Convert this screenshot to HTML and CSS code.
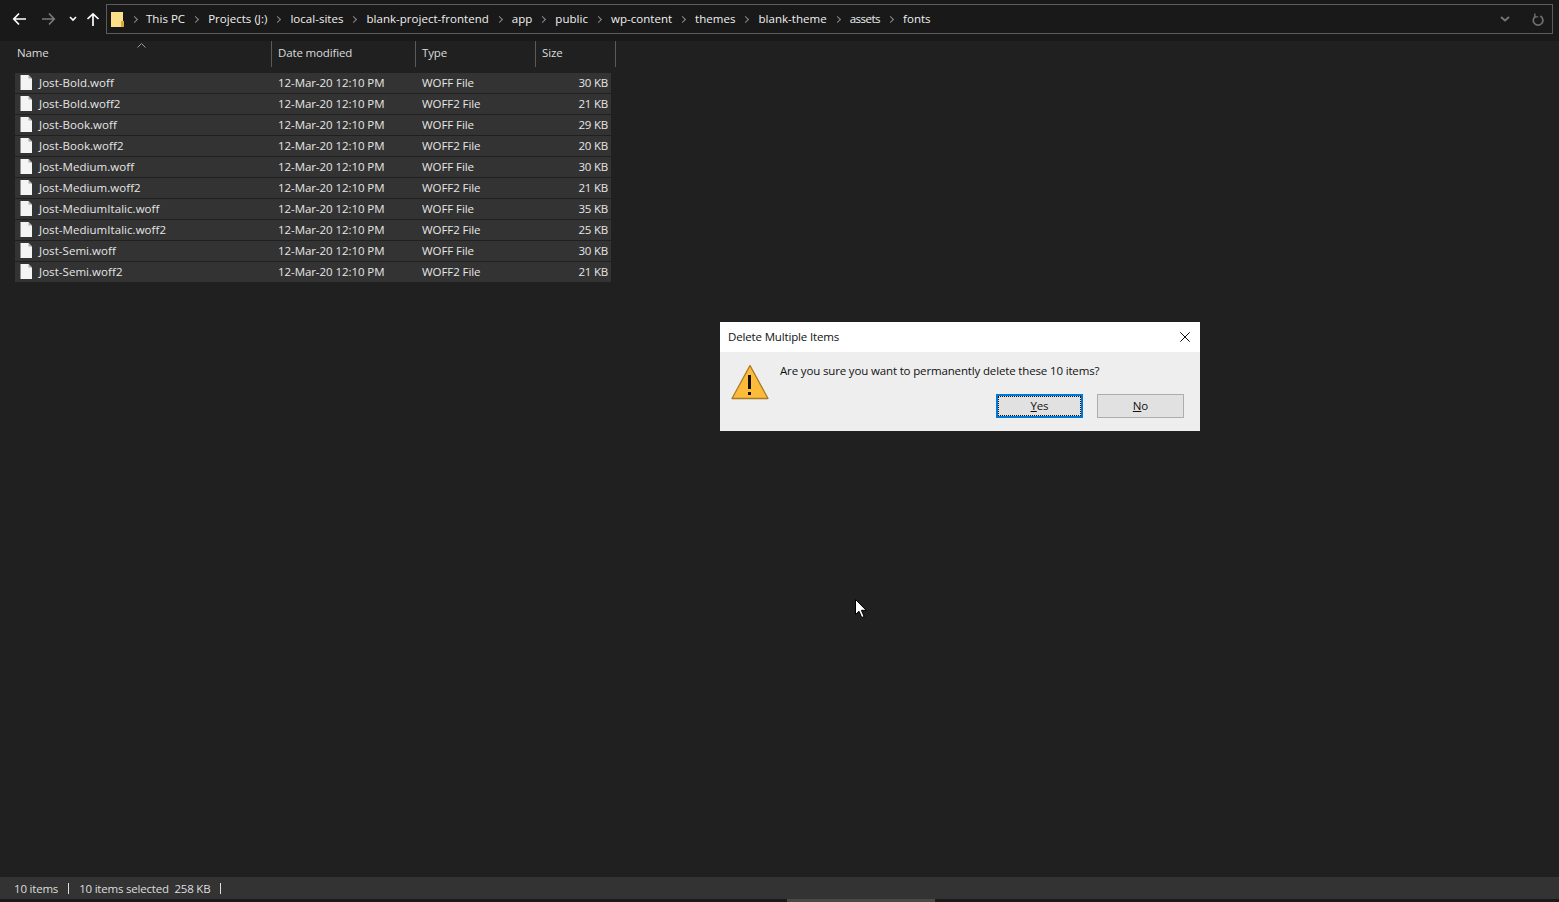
FILE: index.html
```html
<!DOCTYPE html>
<html lang="en">
<head>
    <meta charset="UTF-8">
    <meta name="viewport" content="width=device-width, initial-scale=1.0">
    <title>fonts</title>
    <link rel="stylesheet" href="styles.css">
</head>
<body>
    <div class="explorer">
        <div class="toolbar">
            <div class="nav">
                <svg class="nav-back" width="14" height="14" viewBox="0 0 14 14"><path d="M7 1.5 1.800 7 7 12.500M2 7h12" fill="none" stroke="#fff" stroke-width="1.700"/></svg>
                <svg class="nav-forward" width="14" height="14" viewBox="0 0 14 14"><path d="M7 1.500 12.200 7 7 12.500M12 7H0" fill="none" stroke="#7a7a7a" stroke-width="1.700"/></svg>
                <svg class="nav-recent" width="8" height="6" viewBox="0 0 8 6"><path d="M1 1l3 3 3-3" fill="none" stroke="#fff" stroke-width="1.600"/></svg>
                <svg class="nav-up" width="14" height="14" viewBox="0 0 14 14"><path d="M1.500 7 7 1.800 12.500 7M7 2v12" fill="none" stroke="#fff" stroke-width="1.700"/></svg>
            </div>
            <div class="address">
                <svg class="folder" width="13" height="17" viewBox="0 0 13 17"><path d="M0 1h12v15H0z" fill="#ffe08a"/><path d="M10 10h3v6h-3z" fill="#d9a93f"/></svg>
                <span class="sep first"></span>
                <span class="crumb">This PC</span><span class="sep"></span>
                <span class="crumb">Projects (J:)</span><span class="sep"></span>
                <span class="crumb">local-sites</span><span class="sep"></span>
                <span class="crumb">blank-project-frontend</span><span class="sep"></span>
                <span class="crumb">app</span><span class="sep"></span>
                <span class="crumb">public</span><span class="sep"></span>
                <span class="crumb">wp-content</span><span class="sep"></span>
                <span class="crumb">themes</span><span class="sep"></span>
                <span class="crumb">blank-theme</span><span class="sep"></span>
                <span class="crumb crumb-tight">assets</span><span class="sep"></span>
                <span class="crumb">fonts</span>
                <div class="address-end">
                    <svg width="10" height="6" viewBox="0 0 10 6"><path d="M1 1l4 3.500L9 1" fill="none" stroke="#777" stroke-width="1.800"/></svg>
                    <svg class="refresh" width="12" height="13" viewBox="0 0 12 13"><path d="M3.600 3.200A4.800 4.800 0 1 0 8.200 3" fill="none" stroke="#6f6f6f" stroke-width="1.700"/><path d="M2.800 .5v3.400h3.400" fill="none" stroke="#6f6f6f" stroke-width="1.400"/></svg>
                </div>
            </div>
        </div>

        <div class="list-head">
            <div class="col-name">Name<span class="sort-caret"><svg width="9" height="5" viewBox="0 0 9 5"><path d="M.5 4.500l4-4 4 4" fill="none" stroke="#9a9a9a"/></svg></span></div>
            <div class="col-date">Date modified</div>
            <div class="col-type">Type</div>
            <div class="col-size">Size</div>
        </div>

        <div class="files">
            <div class="file"><span class="file-name"><svg class="file-icon" width="12" height="15" viewBox="0 0 12 15"><path d="M.5 0H8.500L12 3.500V15H.500z" fill="#f4f4f4"/><path d="M8.500 0v3.500H12z" fill="#a8a8a8"/></svg>Jost-Bold.woff</span><span>12-Mar-20 12:10 PM</span><span>WOFF File</span><span class="file-size">30 KB</span></div>
            <div class="file"><span class="file-name"><svg class="file-icon" width="12" height="15" viewBox="0 0 12 15"><path d="M.5 0H8.500L12 3.500V15H.500z" fill="#f4f4f4"/><path d="M8.500 0v3.500H12z" fill="#a8a8a8"/></svg>Jost-Bold.woff2</span><span>12-Mar-20 12:10 PM</span><span>WOFF2 File</span><span class="file-size">21 KB</span></div>
            <div class="file"><span class="file-name"><svg class="file-icon" width="12" height="15" viewBox="0 0 12 15"><path d="M.5 0H8.500L12 3.500V15H.500z" fill="#f4f4f4"/><path d="M8.500 0v3.500H12z" fill="#a8a8a8"/></svg>Jost-Book.woff</span><span>12-Mar-20 12:10 PM</span><span>WOFF File</span><span class="file-size">29 KB</span></div>
            <div class="file"><span class="file-name"><svg class="file-icon" width="12" height="15" viewBox="0 0 12 15"><path d="M.5 0H8.500L12 3.500V15H.500z" fill="#f4f4f4"/><path d="M8.500 0v3.500H12z" fill="#a8a8a8"/></svg>Jost-Book.woff2</span><span>12-Mar-20 12:10 PM</span><span>WOFF2 File</span><span class="file-size">20 KB</span></div>
            <div class="file"><span class="file-name"><svg class="file-icon" width="12" height="15" viewBox="0 0 12 15"><path d="M.5 0H8.500L12 3.500V15H.500z" fill="#f4f4f4"/><path d="M8.500 0v3.500H12z" fill="#a8a8a8"/></svg>Jost-Medium.woff</span><span>12-Mar-20 12:10 PM</span><span>WOFF File</span><span class="file-size">30 KB</span></div>
            <div class="file"><span class="file-name"><svg class="file-icon" width="12" height="15" viewBox="0 0 12 15"><path d="M.5 0H8.500L12 3.500V15H.500z" fill="#f4f4f4"/><path d="M8.500 0v3.500H12z" fill="#a8a8a8"/></svg>Jost-Medium.woff2</span><span>12-Mar-20 12:10 PM</span><span>WOFF2 File</span><span class="file-size">21 KB</span></div>
            <div class="file"><span class="file-name"><svg class="file-icon" width="12" height="15" viewBox="0 0 12 15"><path d="M.5 0H8.500L12 3.500V15H.500z" fill="#f4f4f4"/><path d="M8.500 0v3.500H12z" fill="#a8a8a8"/></svg>Jost-MediumItalic.woff</span><span>12-Mar-20 12:10 PM</span><span>WOFF File</span><span class="file-size">35 KB</span></div>
            <div class="file"><span class="file-name"><svg class="file-icon" width="12" height="15" viewBox="0 0 12 15"><path d="M.5 0H8.500L12 3.500V15H.500z" fill="#f4f4f4"/><path d="M8.500 0v3.500H12z" fill="#a8a8a8"/></svg>Jost-MediumItalic.woff2</span><span>12-Mar-20 12:10 PM</span><span>WOFF2 File</span><span class="file-size">25 KB</span></div>
            <div class="file"><span class="file-name"><svg class="file-icon" width="12" height="15" viewBox="0 0 12 15"><path d="M.5 0H8.500L12 3.500V15H.500z" fill="#f4f4f4"/><path d="M8.500 0v3.500H12z" fill="#a8a8a8"/></svg>Jost-Semi.woff</span><span>12-Mar-20 12:10 PM</span><span>WOFF File</span><span class="file-size">30 KB</span></div>
            <div class="file"><span class="file-name"><svg class="file-icon" width="12" height="15" viewBox="0 0 12 15"><path d="M.5 0H8.500L12 3.500V15H.500z" fill="#f4f4f4"/><path d="M8.500 0v3.500H12z" fill="#a8a8a8"/></svg>Jost-Semi.woff2</span><span>12-Mar-20 12:10 PM</span><span>WOFF2 File</span><span class="file-size">21 KB</span></div>
        </div>

        <div class="status">
            <span>10 items</span><i class="bar"></i>
            <span>10 items selected&nbsp; 258 KB</span><i class="bar"></i>
        </div>
        <div class="taskbar"><div class="task-active"></div></div>
    </div>

    <div class="dialog">
        <div class="dialog-title">
            <span>Delete Multiple Items</span>
            <svg width="10" height="10" viewBox="0 0 10 10"><path d="M.3.3l9.400 9.400M9.700.3l-9.400 9.400" stroke="#111" stroke-width="1" fill="none"/></svg>
        </div>
        <div class="dialog-body">
            <svg class="warn" width="38" height="36" viewBox="0 0 38 36"><path d="M19 1.500 37 34.500H1z" fill="#fdbb3c" stroke="#a87a22" stroke-width="1.300" stroke-linejoin="round"/><path d="M17 11h3v14h-3zM17 28h3v3h-3z" fill="#111"/></svg>
            <div class="dialog-main">
                <p class="dialog-msg">Are you sure you want to permanently delete these 10 items?</p>
                <div class="dialog-btns">
                    <button class="btn btn-default"><u>Y</u>es</button>
                    <button class="btn"><u>N</u>o</button>
                </div>
            </div>
        </div>
    </div>

    <svg class="cursor" width="12" height="20" viewBox="0 0 12 20"><path d="M.5.500v15l3.500-3.300 2.700 6.300 2.400-1-2.700-6.200h4.800z" fill="#fff" stroke="#000"/></svg>
</body>
</html>
```

FILE: styles.css
```css
body {
    margin: 0;
    background-color: #202020;
    color: #e6e6e6;
    font-family: "Open Sans", Arial, sans-serif;
    font-size: 11.5px;
    letter-spacing: -0.15px;
    overflow: hidden;
}

.explorer {
    display: flex;
    flex-direction: column;
    height: 902px;
}

/* top bar */
.toolbar {
    display: flex;
    align-items: flex-start;
    height: 41px;
    padding-top: 4px;
    box-sizing: border-box;
    background-color: #191919;
}

.nav {
    position: relative;
    width: 106px;
    height: 30px;
    flex: none;
}

.nav svg {
    position: absolute;
}

.nav-back { left: 12px; top: 8px; }
.nav-forward { left: 42px; top: 8px; }
.nav-recent { left: 69px; top: 12px; }
.nav-up { left: 86px; top: 8px; }

.address {
    display: flex;
    align-items: center;
    flex: 1;
    height: 30px;
    margin-right: 6px;
    box-sizing: border-box;
    border: 1px solid #5c5c5c;
    background-color: #191919;
    color: #f0f0f0;
    padding-left: 4px;
}

.folder {
    flex: none;
}

.sep {
    display: flex;
    align-items: center;
    justify-content: center;
    width: 23px;
    height: 10px;
    flex: none;
}

.sep::before {
    content: "";
    width: 4px;
    height: 4px;
    margin-left: -2px;
    border-top: 1px solid #8a8a8a;
    border-right: 1px solid #8a8a8a;
    transform: rotate(45deg);
}

.sep.first {
    width: 22px;
}

.crumb {
    white-space: nowrap;
    padding-bottom: 2px;
    letter-spacing: 0.03px;
}

.crumb-tight {
    letter-spacing: -0.5px;
}

.address-end {
    margin-left: auto;
    display: flex;
    align-items: center;
    gap: 22px;
    padding-right: 8px;
}

/* column headers */
.list-head {
    display: grid;
    grid-template-columns: 257px 144px 120px 80px;
    height: 26px;
    margin-left: 15px;
    margin-bottom: 6px;
    width: 601px;
    color: #dcdcdc;
}

.list-head > div {
    box-sizing: border-box;
    border-right: 1px solid #5a5a5a;
    padding-left: 6px;
    line-height: 24px;
}

.list-head .col-name {
    position: relative;
    padding-left: 2px;
}

.sort-caret {
    position: absolute;
    left: 122px;
    top: 0;
    line-height: 5px;
}

/* rows */
.files {
    flex: 1;
    margin-left: 15px;
    width: 596px;
}

.file {
    display: grid;
    grid-template-columns: 257px 144px 120px 75px;
    align-items: center;
    height: 20px;
    margin-bottom: 1px;
    background-color: #333333;
    color: #e6e6e6;
    letter-spacing: -0.07px;
}

.file > span {
    padding-left: 6px;
    padding-bottom: 2px;
    white-space: nowrap;
}

.file .file-name {
    display: flex;
    align-items: center;
    padding-left: 5px;
    letter-spacing: 0.05px;
}

.file-icon {
    margin-right: 7px;
    flex: none;
}

.file .file-size {
    text-align: right;
    padding-right: 3px;
    letter-spacing: -0.2px;
}

/* bottom */
.status {
    display: flex;
    align-items: center;
    height: 22px;
    padding-left: 14px;
    background-color: #333333;
    color: #dedede;
    letter-spacing: -0.2px;
}

.bar {
    width: 1px;
    height: 11px;
    margin: 0 10px;
    background-color: #e0e0e0;
}

.taskbar {
    height: 3px;
    background-color: #1a1a1a;
}

.task-active {
    width: 148px;
    height: 3px;
    margin-left: 787px;
    background-color: #4a4a44;
}

/* dialog */
.dialog {
    position: absolute;
    left: 720px;
    top: 322px;
    width: 480px;
    height: 109px;
    background-color: #eeeeee;
    color: #111;
}

.dialog-title {
    display: flex;
    align-items: center;
    justify-content: space-between;
    height: 30px;
    padding: 0 10px 0 8px;
    background-color: #fff;
}

.dialog-title span {
    padding-bottom: 2px;
}

.dialog-body {
    display: flex;
    padding: 12px 16px 0 11px;
}

.warn {
    margin-right: 11px;
    flex: none;
}

.dialog-main {
    flex: 1;
}

.dialog-msg {
    margin: -2px 0 14px;
    line-height: 18px;
}

.dialog-btns {
    display: flex;
    justify-content: flex-end;
    gap: 14px;
}

.btn {
    width: 87px;
    height: 24px;
    padding: 0 0 2px;
    border: 1px solid #adadad;
    background-color: #e1e1e1;
    color: #111;
    font-family: inherit;
    font-size: 11.5px;
    letter-spacing: -0.15px;
}

.btn-default {
    border: 2px solid #0078d7;
    outline: 1px dotted #111;
    outline-offset: -3px;
}

.cursor {
    position: absolute;
    left: 855px;
    top: 599px;
}
```
